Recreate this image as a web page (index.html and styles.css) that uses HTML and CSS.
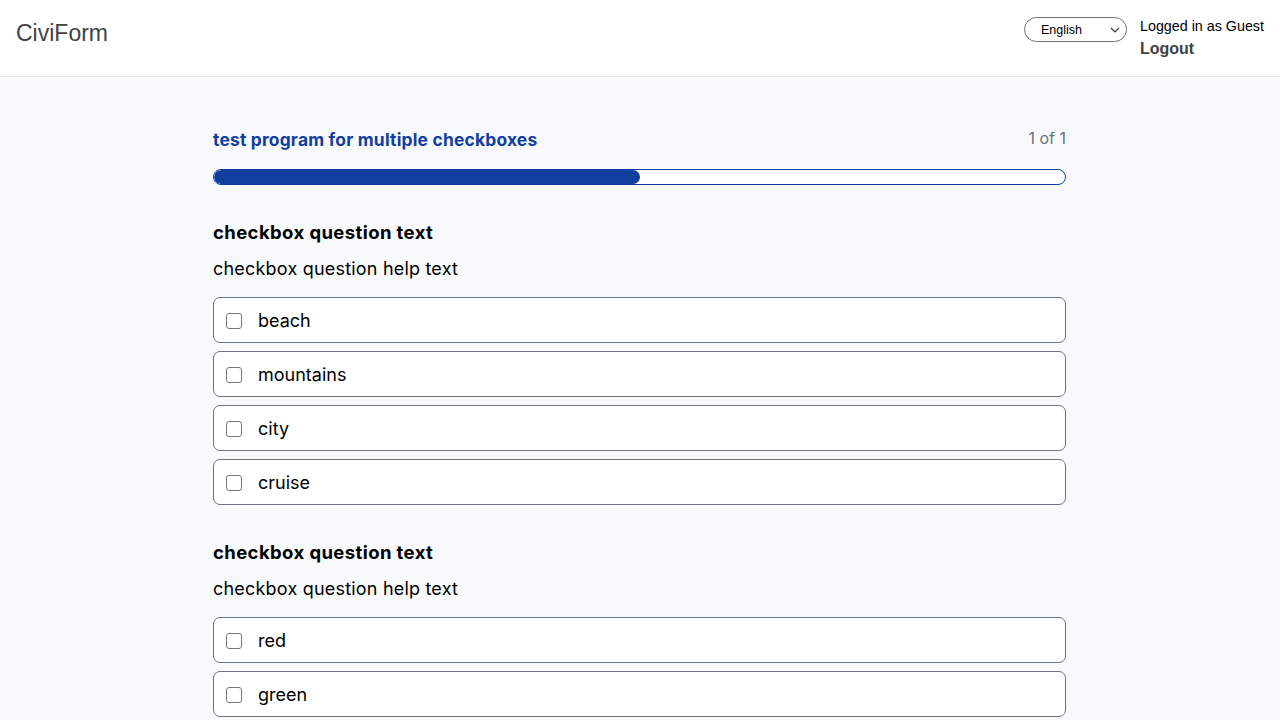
FILE: index.html
```html
<!DOCTYPE html>
<html lang="en">
<head>
<meta charset="utf-8">
<title>CiviForm</title>
<link rel="stylesheet" href="styles.css">
</head>
<body>
<header class="topbar">
  <div class="brand">CiviForm</div>
  <div class="user-area">
    <div class="lang">
      <span class="lang-label">English</span>
      <svg class="chev" width="10" height="6" viewBox="0 0 10 6"><path d="M1 1 L5 5 L9 1" fill="none" stroke="#333" stroke-width="1.2"/></svg>
    </div>
    <div class="user-info">
      <div class="logged">Logged in as Guest</div>
      <div class="logout">Logout</div>
    </div>
  </div>
</header>
<main class="content">
  <div class="program-row">
    <div class="program-title">test program for multiple checkboxes</div>
    <div class="progress-count">1 of 1</div>
  </div>
  <div class="progress"><div class="progress-fill" style="width:50%"></div></div>

  <section class="question">
    <div class="q-text">checkbox question text</div>
    <div class="q-help">checkbox question help text</div>
    <div class="options">
      <label class="option"><span class="box"></span><span class="opt-label">beach</span></label>
      <label class="option"><span class="box"></span><span class="opt-label">mountains</span></label>
      <label class="option"><span class="box"></span><span class="opt-label">city</span></label>
      <label class="option"><span class="box"></span><span class="opt-label">cruise</span></label>
    </div>
  </section>

  <section class="question">
    <div class="q-text">checkbox question text</div>
    <div class="q-help">checkbox question help text</div>
    <div class="options">
      <label class="option"><span class="box"></span><span class="opt-label">red</span></label>
      <label class="option"><span class="box"></span><span class="opt-label">green</span></label>
      <label class="option"><span class="box"></span><span class="opt-label">blue</span></label>
    </div>
  </section>
</main>
</body>
</html>
```
FILE: styles.css
```css
* { box-sizing: border-box; }
html, body { margin: 0; padding: 0; }
body {
  background: #f8f9fb;
  font-family: Inter, "Noto Sans", sans-serif;
  color: #000;
  overflow: hidden;
  height: 720px;
}
.topbar {
  height: 77px;
  background: #fff;
  border-bottom: 1px solid #e5e7eb;
  display: flex;
  justify-content: space-between;
  align-items: flex-start;
  padding: 0 16px;
}
.brand {
  font-family: "Liberation Sans", Arial, sans-serif;
  font-size: 23px;
  color: #424242;
  margin-top: 20px;
}
.user-area {
  display: flex;
  align-items: flex-start;
  gap: 13px;
  margin-top: 17px;
}
.lang {
  width: 103px;
  height: 25px;
  border: 1px solid #6b7280;
  border-radius: 13px;
  display: flex;
  align-items: center;
  justify-content: space-between;
  padding: 0 6px 0 16px;
  font-family: "Liberation Sans", Arial, sans-serif;
  font-size: 12.5px;
  color: #000;
  background: #fff;
}
.lang-label { margin-top: 1px; }
.chev { display: block; }
.user-info {
  font-family: "Liberation Sans", Arial, sans-serif;
}
.logged { font-size: 14.3px; color: #000; line-height: 18px; }
.logout { font-size: 16px; font-weight: bold; color: #424242; line-height: 20px; margin-top: 4px; }

.content {
  width: 853px;
  margin: 0 0 0 213px;
  padding-top: 50px;
}
.program-row {
  display: flex;
  justify-content: space-between;
  align-items: flex-start;
}
.program-title {
  font-size: 17.4px;
  font-weight: 700;
  color: #113f9f;
  line-height: 26px;
  letter-spacing: 0.2px;
}
.progress-count {
  font-size: 16px;
  color: #6b7280;
  line-height: 22px;
}
.progress {
  margin-top: 16px;
  height: 16px;
  border: 1px solid #113f9f;
  border-radius: 8px;
  background: #fff;
  overflow: hidden;
}
.progress-fill {
  height: 100%;
  background: #113f9f;
  border-radius: 8px;
}
.question { margin-top: 34px; }
.question + .question { margin-top: 34px; }
.q-text {
  font-size: 18.5px;
  font-weight: 700;
  line-height: 26px;
  letter-spacing: 0.4px;
}
.q-help {
  font-size: 18px;
  line-height: 26px;
  margin-top: 10px;
  letter-spacing: 0.2px;
  position: relative;
  top: 1px;
}
.options {
  margin-top: 16px;
  display: flex;
  flex-direction: column;
  gap: 8px;
}
.option {
  height: 46px;
  background: #fff;
  border: 1px solid #6b7280;
  border-radius: 7px;
  display: flex;
  align-items: center;
  padding-left: 12px;
}
.box {
  width: 16px;
  height: 16px;
  border: 1px solid #767676;
  border-radius: 3px;
  background: #fff;
  flex: none;
  margin-top: 2px;
}
.opt-label {
  font-size: 18px;
  margin-left: 16px;
}
```
